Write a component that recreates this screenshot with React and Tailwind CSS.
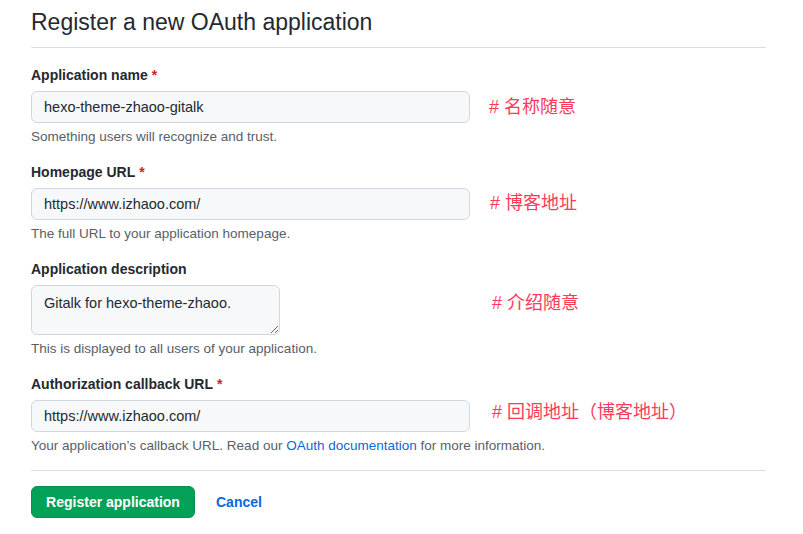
// App.jsx
const noteCls = "mt-1 text-[13.5px] leading-[19px] text-[#57606a]";
const inputCls =
  "h-8 rounded-md border border-[#d0d7de] bg-[#f6f8fa] px-3 text-[14.5px] text-[#24292f] outline-none";

function Note({ children }) {
  return (
    <span
      className="whitespace-nowrap text-[18px] leading-6 text-[#fb3a5c]"
      style={{ fontFamily: '"Liberation Sans", "Noto Sans CJK SC", sans-serif' }}
    >
      {children}
    </span>
  );
}

function Label({ children, required }) {
  return (
    <label className="block text-sm font-bold leading-[21px] text-[#24292f]">
      {children}
      {required && <span className="ml-1 text-[#cf222e]">*</span>}
    </label>
  );
}

export default function App() {
  return (
    <div
      className="min-h-[534px] bg-white"
      style={{ fontFamily: '"Liberation Sans", Arial, sans-serif' }}
    >
      <div className="ml-[31px] w-[735px]">
        {/* Header */}
        <div className="border-b border-[#d8dee4] pt-1 pb-[7px]">
          <h1 className="text-[23px] leading-9 font-normal text-[#24292f]">
            Register a new OAuth application
          </h1>
        </div>

        <form className="flex flex-col gap-4 pt-[17px]">
          {/* Application name */}
          <div>
            <Label required>Application name</Label>
            <div className="mt-[5px] flex items-start gap-[19px]">
              <input
                className={`${inputCls} w-[439px]`}
                defaultValue="hexo-theme-zhaoo-gitalk"
                readOnly
              />
              <div className="mt-1">
                <Note># 名称随意</Note>
              </div>
            </div>
            <p className={noteCls}>Something users will recognize and trust.</p>
          </div>

          {/* Homepage URL */}
          <div>
            <Label required>Homepage URL</Label>
            <div className="mt-[5px] flex items-start gap-[20px]">
              <input
                className={`${inputCls} w-[439px]`}
                defaultValue="https://www.izhaoo.com/"
                readOnly
              />
              <div className="mt-[3px]">
                <Note># 博客地址</Note>
              </div>
            </div>
            <p className={noteCls}>The full URL to your application homepage.</p>
          </div>

          {/* Description */}
          <div>
            <Label>Application description</Label>
            <div className="mt-[5px] flex items-start gap-[212px]">
              <textarea
                className="h-[50px] w-[249px] rounded-md border border-[#d0d7de] bg-[#f6f8fa] px-3 py-[7px] text-[14.5px] leading-5 text-[#24292f] outline-none"
                defaultValue="Gitalk for hexo-theme-zhaoo."
                readOnly
              />
              <div className="mt-[6px]">
                <Note># 介绍随意</Note>
              </div>
            </div>
            <p className={noteCls}>This is displayed to all users of your application.</p>
          </div>

          {/* Callback URL */}
          <div>
            <Label required>Authorization callback URL</Label>
            <div className="mt-[5px] flex items-start gap-[22px]">
              <input
                className={`${inputCls} w-[439px]`}
                defaultValue="https://www.izhaoo.com/"
                readOnly
              />
              <div>
                <Note># 回调地址（博客地址）</Note>
              </div>
            </div>
            <p className={noteCls}>
              Your application’s callback URL. Read our{" "}
              <a className="text-[#0969da]">OAuth documentation</a> for more information.
            </p>
          </div>

          {/* Actions */}
          <div className="-mt-px flex items-center gap-[21px] border-t border-[#d8dee4] pt-[15px]">
            <button
              type="button"
              className="h-8 w-[164px] rounded-md border border-[#0a8f4f] bg-[#03a157] text-sm font-bold text-white"
            >
              Register application
            </button>
            <a className="text-sm font-bold text-[#0969da]">Cancel</a>
          </div>
        </form>
      </div>
    </div>
  );
}
